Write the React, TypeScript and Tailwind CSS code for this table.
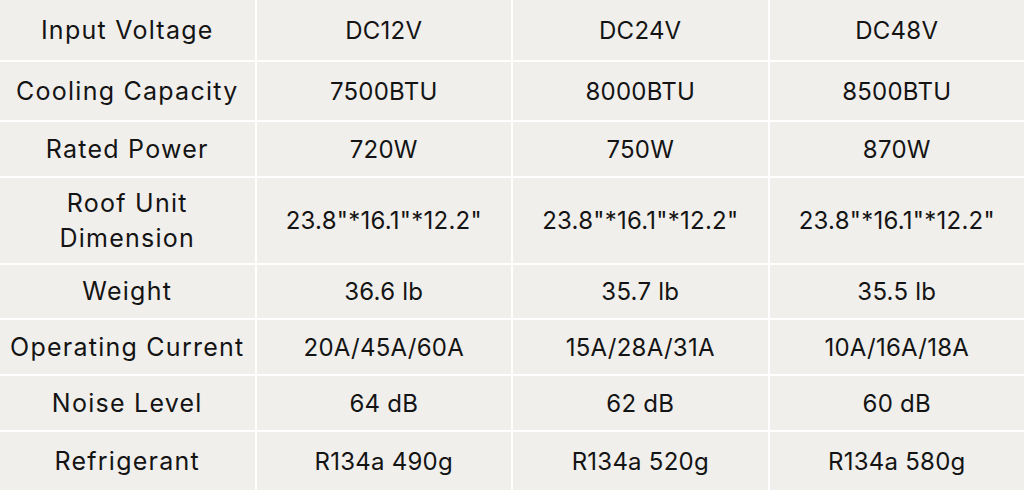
const rows: string[][] = [
  ["Input Voltage", "DC12V", "DC24V", "DC48V"],
  ["Cooling Capacity", "7500BTU", "8000BTU", "8500BTU"],
  ["Rated Power", "720W", "750W", "870W"],
  ["Roof Unit Dimension", '23.8"*16.1"*12.2"', '23.8"*16.1"*12.2"', '23.8"*16.1"*12.2"'],
  ["Weight", "36.6 lb", "35.7 lb", "35.5 lb"],
  ["Operating Current", "20A/45A/60A", "15A/28A/31A", "10A/16A/18A"],
  ["Noise Level", "64 dB", "62 dB", "60 dB"],
  ["Refrigerant", "R134a 490g", "R134a 520g", "R134a 580g"],
];

export default function App() {
  return (
    <div className="h-[490px] w-[1024px] overflow-hidden bg-white">
      <div
        className="grid grid-cols-4 grid-rows-[60px_58px_54px_85px_53px_54px_54px_58px] gap-[2px] leading-[35px] text-[#141414]"
        style={{ fontFamily: "Inter, 'Noto Sans', sans-serif" }}
      >
        {rows.map((row, r) =>
          row.map((cell, c) => (
            <div
              key={`${r}-${c}`}
              className={`flex items-center justify-center bg-[#f1efec] text-center ${
                c === 0
                  ? "px-1 text-[25px] tracking-[0.05em]"
                  : "px-1 text-[24px] tracking-[0.01em]"
              } ${r === 3 && c === 0 ? "px-12" : ""}`}
            >
              {cell}
            </div>
          ))
        )}
      </div>
    </div>
  );
}
